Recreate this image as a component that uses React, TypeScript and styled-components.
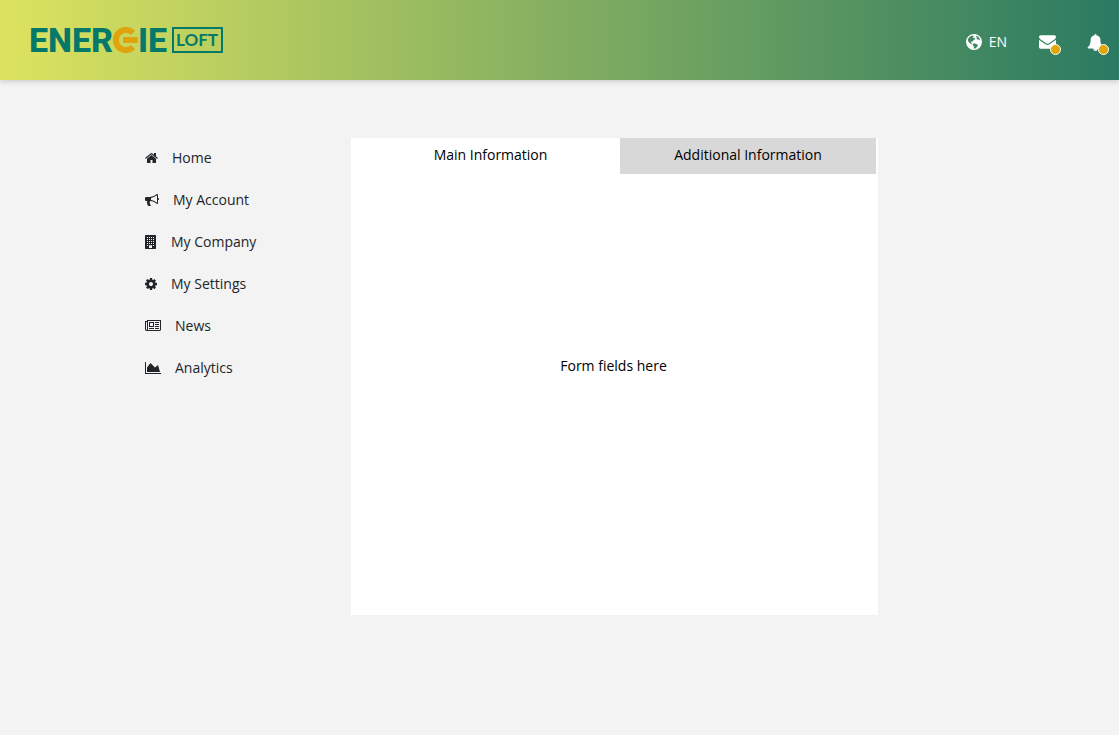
import React from "react";
import styled, { createGlobalStyle } from "styled-components";

const GlobalStyle = createGlobalStyle`
  * { box-sizing: border-box; }
  body {
    margin: 0;
    background: #f3f3f3;
    color: #212529;
    font-family: "Open Sans", "Noto Sans", sans-serif;
    font-size: 14px;
    line-height: 20px;
  }
  button { font: inherit; color: inherit; border: 0; padding: 0; cursor: pointer; }
`;

const Header = styled.header`
  display: flex;
  justify-content: space-between;
  align-items: center;
  height: 80px;
  padding: 0 14px 0 28px;
  background: linear-gradient(to right, #dde35f, #2a7a62);
  box-shadow: 0 1px 6px rgba(0, 0, 0, 0.2);
`;

const LogoLink = styled.a`
  display: block;
  line-height: 0;
`;

const Actions = styled.div`
  display: flex;
  align-items: center;
  gap: 28px;
  padding-top: 4px;
  color: #fff;
`;

const LanguageButton = styled.button`
  display: flex;
  align-items: center;
  gap: 7px;
  margin-right: 2px;
  background: none;
`;

const IconButton = styled.button`
  position: relative;
  display: flex;
  align-items: center;
  justify-content: center;
  width: 20px;
  height: 20px;
  background: none;
`;

const Badge = styled.span`
  position: absolute;
  right: -4px;
  bottom: -3px;
  width: 11px;
  height: 11px;
  border: 1px solid #fff;
  border-radius: 50%;
  background: #dfa808;
`;

const Page = styled.div`
  display: flex;
  align-items: flex-start;
  padding: 58px 241px 40px 145px;
`;

const Sidebar = styled.nav`
  flex: 0 0 206px;
  padding-top: 10px;
`;

const Menu = styled.ul`
  display: flex;
  flex-direction: column;
  gap: 22px;
  margin: 0;
  padding: 0;
  list-style: none;
`;

const MenuLink = styled.a`
  display: flex;
  align-items: center;
  gap: 14px;
  color: inherit;
  text-decoration: none;
`;

const Panel = styled.main`
  flex: 1;
  display: flex;
  flex-direction: column;
  min-height: 477px;
  background: #fff;
  color: #000;
`;

const Tabs = styled.div`
  display: flex;
  padding-right: 2px;
`;

const Tab = styled.button<{ $active: boolean }>`
  flex: ${(p) => (p.$active ? "1 1 269px" : "1 1 256px")};
  height: 36px;
  padding: ${(p) => (p.$active ? "0 0 2px 10px" : "0 0 2px")};
  background: ${(p) => (p.$active ? "#fff" : "#d8d8d8")};
`;

const PanelBody = styled.section`
  flex: 1;
  padding: 182px 2px 0 0;
  text-align: center;
`;

type GlyphProps = { box: string; width: number; height: number; children: React.ReactNode };

const Glyph = ({ box, width, height, children }: GlyphProps) => (
  <svg viewBox={box} width={width} height={height} fill="currentColor" aria-hidden="true">
    {children}
  </svg>
);

const HomeIcon = () => (
  <Glyph box="64 128 1664 1536" width={13} height={12}>
    <path d="M1472 992v480q0 26-19 45t-45 19h-384v-384h-256v384h-384q-26 0-45-19t-19-45v-480q0-1 .5-3t.5-3l575-474 575 474q1 2 1 6zm223-69l-62 74q-8 9-21 11h-3q-13 0-21-7l-692-577-692 577q-12 8-24 7-13-2-21-11l-62-74q-8-10-7-23.5t11-21.5l719-599q32-26 76-26t76 26l244 204v-195q0-14 9-23t23-9h192q14 0 23 9t9 23v408l219 182q10 8 11 21.5t-7 23.5z" />
  </Glyph>
);

const BullhornIcon = () => (
  <Glyph box="0 0 1792 1792" width={14} height={14}>
    <path d="M1664 640q53 0 90.5 37.5t37.5 90.5-37.5 90.5-90.5 37.5v384q0 52-38 90t-90 38q-417-347-812-380-58 19-91 66t-31 100.5 40 92.5q-20 33-23 65.5t6 58 33.5 55 48 50 61.5 50.5q-29 58-111.5 83t-168.5 11.5-132-55.5q-7-23-29.5-87.5t-32-94.5-23-89-15-101 3.5-98.5 22-110.5h-122q-66 0-113-47t-47-113v-192q0-66 47-113t113-47h480q435 0 896-384 52 0 90 38t38 90v384zm-128 604v-954q-394 302-768 343v270q377 42 768 341z" />
  </Glyph>
);

const windowCells = [256, 512, 768, 1024, 1280].flatMap((y) =>
  [256, 512, 768, 1024].filter((x) => y < 1280 || x === 256 || x === 1024).map((x) => `M${x} ${y}v128h128v-128z`)
);

const BuildingIcon = () => (
  <Glyph box="0 0 1536 1792" width={12} height={14}>
    <path fillRule="evenodd" d={`M64 0h1280l64 64v1664l-64 64h-1280l-64-64v-1664z${windowCells.join("")}M512 1312v352h384v-352z`} />
  </Glyph>
);

const CogIcon = () => (
  <Glyph box="128 128 1536 1536" width={12} height={12}>
    <path d="M1152 896q0-106-75-181t-181-75-181 75-75 181 75 181 181 75 181-75 75-181zm512-109v222q0 12-8 23t-20 13l-185 28q-19 54-39 91 35 50 107 138 10 12 10 25t-9 23q-27 37-99 108t-94 71q-12 0-26-9l-138-108q-44 23-91 38-16 136-29 186-7 28-36 28h-222q-14 0-24.5-8.5t-11.5-21.5l-28-184q-49-16-90-37l-141 107q-10 9-25 9-14 0-25-11-126-114-165-168-7-10-7-23 0-12 8-23 15-21 51-66.5t54-70.5q-27-50-41-99l-183-27q-13-2-21-12.5t-8-23.5v-222q0-12 8-23t19-13l186-28q14-46 39-92-40-57-107-138-10-12-10-24 0-10 9-23 26-36 98.5-107.5t94.5-71.5q13 0 26 10l138 107q44-23 91-38 16-136 29-186 7-28 36-28h222q14 0 24.5 8.5t11.5 21.5l28 184q49 16 90 37l142-107q9-9 24-9 13 0 25 10 129 119 165 170 7 8 7 22 0 12-8 23-15 21-51 66.5t-54 70.5q26 50 41 98l183 28q13 2 21 12.5t8 23.5z" />
  </Glyph>
);

const NewspaperIcon = () => (
  <Glyph box="0 0 2048 1792" width={16} height={14}>
    <path d="M1024 512h-384v384h384v-384zm128 640v128h-640v-128h640zm0-768v640h-640v-640h640zm640 768v128h-512v-128h512zm0-256v128h-512v-128h512zm0-256v128h-512v-128h512zm0-256v128h-512v-128h512zm-1536 960v-960h-128v960q0 26 19 45t45 19 45-19 19-45zm1664 0v-1088h-1536v1088q0 33-11 64h1483q26 0 45-19t19-45zm128-1216v1216q0 80-56 136t-136 56h-1664q-80 0-136-56t-56-136v-1088h256v-128h1792z" />
  </Glyph>
);

const ChartIcon = () => (
  <Glyph box="0 0 2048 1792" width={16} height={14}>
    <path d="M2048 1536v128h-2048v-1536h128v1408h1920zm-384-1024l256 896h-1664v-576l448-576 576 576z" />
  </Glyph>
);

const GlobeIcon = () => (
  <Glyph box="0 0 16 16" width={16} height={16}>
    <path
      fillRule="evenodd"
      d="M8 0a8 8 0 1 1 0 16a8 8 0 0 1 0-16zM5.4 1.700L3.400 3L1.800 5.300L2.200 7.400L3.600 9L5 9.800L6.200 10.600L6 9.300L4.900 8.600L5.300 7.600L6.500 7.800L7 6.700L8.600 5.600L9.200 4.700L8.200 3.600L7.400 4.300L6.600 3.500L7.700 2.500L7 1.600zM10.300 1.700L9.900 2.800L11 3.300L10.500 4.500L11.200 5.600L12.600 5.400L14.200 6.600L13.500 4.200L12.200 2.700zM7.400 9.600L6.700 11L7.800 12.600L8 14.700L9.800 14.200L11.200 12.600L12.200 11.200L10.800 10.200L9.200 9.400z"
    />
  </Glyph>
);

const EnvelopeIcon = () => (
  <Glyph box="0 128 1792 1664" width={17} height={16}>
    <path d="M1792 710v794q0 66-47 113t-113 47h-1472q-66 0-113-47t-47-113v-794q44 49 101 87 362 246 497 345 57 42 92.5 65.5t94.5 48 110 24.5h2q51 0 110-24.5t94.5-48 92.5-65.5q170-123 498-345 57-39 100-87zm0-294q0 79-49 151t-122 123q-376 261-468 325-10 7-42.5 31t-54 38.5-52 32.5-57.5 27-50 9h-2q-23 0-50-9t-57.5-27-52-32.5-54-38.5-42.5-31q-91-64-262-182.5t-205-142.5q-62-42-117-115.5t-55-136.5q0-78 41.5-130t118.5-52h1472q65 0 112.5 47t47.5 113z" />
  </Glyph>
);

const BellIcon = () => (
  <Glyph box="0 0 1792 1792" width={17} height={17}>
    <path d="M912 1696q0-16-16-16-59 0-101.500-42.500t-42.500-101.500q0-16-16-16t-16 16q0 73 51.500 124.500t124.500 51.500q16 0 16-16zm816-288q0 52-38 90t-90 38h-448q0 106-75 181t-181 75-181-75-75-181h-448q-52 0-90-38t-38-90q50-42 91-88t85-119.500 74.500-158.500 50-206 19.500-260q0-152 117-282.500t307-158.500q-8-19-8-39 0-40 28-68t68-28 68 28 28 68q0 20-8 39 190 28 307 158.500t117 282.500q0 139 19.500 260t50 206 74.500 158.500 85 119.500 91 88z" />
  </Glyph>
);

const Logo = () => (
  <svg width="208" height="48" viewBox="0 0 208 48" role="img" aria-label="Energie Loft">
    <g fill="#04796a" fontFamily="Roboto, sans-serif" fontWeight="800" fontSize="34">
      <text x="1" y="36">ENER</text>
      <text x="110" y="36">IE</text>
    </g>
    <path d="M105 17A10 10 0 1 0 105 31M95 24H110" fill="none" stroke="#dfa30e" strokeWidth="6" />
    <rect x="145" y="12" width="49" height="24" fill="none" stroke="#04796a" strokeWidth="2" />
    <text x="148" y="30" fill="#04796a" fontFamily="Lato, sans-serif" fontWeight="700" fontSize="17">LOFT</text>
  </svg>
);

const menuItems = [
  { label: "Home", icon: <HomeIcon /> },
  { label: "My Account", icon: <BullhornIcon /> },
  { label: "My Company", icon: <BuildingIcon /> },
  { label: "My Settings", icon: <CogIcon /> },
  { label: "News", icon: <NewspaperIcon /> },
  { label: "Analytics", icon: <ChartIcon /> },
];

export default function App() {
  return (
    <>
      <GlobalStyle />
      <Header>
        <LogoLink href="#home"><Logo /></LogoLink>
        <Actions>
          <LanguageButton><GlobeIcon />EN</LanguageButton>
          <IconButton aria-label="Messages"><EnvelopeIcon /><Badge /></IconButton>
          <IconButton aria-label="Notifications"><BellIcon /><Badge /></IconButton>
        </Actions>
      </Header>
      <Page>
        <Sidebar aria-label="Main">
          <Menu>
            {menuItems.map((item) => (
              <li key={item.label}>
                <MenuLink href="#">{item.icon}{item.label}</MenuLink>
              </li>
            ))}
          </Menu>
        </Sidebar>
        <Panel>
          <Tabs role="tablist">
            <Tab role="tab" aria-selected="true" $active>Main Information</Tab>
            <Tab role="tab" aria-selected="false" $active={false}>Additional Information</Tab>
          </Tabs>
          <PanelBody role="tabpanel">Form fields here</PanelBody>
        </Panel>
      </Page>
    </>
  );
}
